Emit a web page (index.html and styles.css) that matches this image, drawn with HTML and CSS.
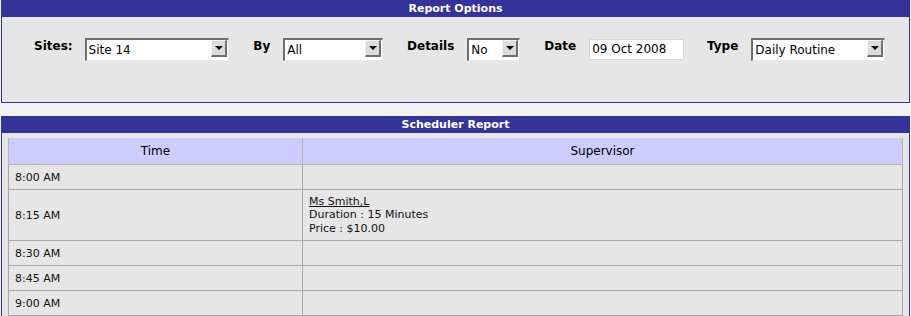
FILE: index.html
```html
<!DOCTYPE html>
<html lang="en">
<head>
	<meta charset="utf-8">
	<title>Scheduler Report</title>
	<link rel="stylesheet" href="styles.css">
</head>
<body>
	<div class="panel options">
		<div class="panel_title">Report Options</div>
		<div class="options_row">
			<span class="opt_label lbl_sites">Sites:</span>
			<div class="fake_select sel_sites"><span class="sel_value">Site 14</span><span class="sel_btn"></span></div>
			<span class="opt_label">By</span>
			<div class="fake_select sel_by"><span class="sel_value">All</span><span class="sel_btn"></span></div>
			<span class="opt_label">Details</span>
			<div class="fake_select sel_details"><span class="sel_value">No</span><span class="sel_btn"></span></div>
			<span class="opt_label">Date</span>
			<div class="date_input">09 Oct 2008</div>
			<span class="opt_label">Type</span>
			<div class="fake_select sel_type"><span class="sel_value">Daily Routine</span><span class="sel_btn"></span></div>
		</div>
	</div>
	<div class="panel report">
		<div class="panel_title">Scheduler Report</div>
		<div class="report_body">
			<table class="sched">
				<tr>
					<th class="col_time">Time</th>
					<th>Supervisor</th>
				</tr>
				<tr>
					<td>8:00 AM</td>
					<td></td>
				</tr>
				<tr>
					<td>8:15 AM</td>
					<td class="booking">
						<a class="who" href="#">Ms Smith,L</a><br>
						Duration : 15 Minutes<br>
						Price : $10.00
					</td>
				</tr>
				<tr>
					<td>8:30 AM</td>
					<td></td>
				</tr>
				<tr>
					<td>8:45 AM</td>
					<td></td>
				</tr>
				<tr>
					<td>9:00 AM</td>
					<td></td>
				</tr>
			</table>
		</div>
	</div>
</body>
</html>
```

FILE: styles.css
```css
body {
	margin: 0 1px;
	background: #f2f2f2;
	font-family: "DejaVu Sans", Verdana, sans-serif;
	color: #000;
}
.panel {
	border: 1px solid #333399;
	border-top: none;
	background: #e6e6e6;
	box-sizing: border-box;
	width: 909px;
}
.panel_title {
	background: #333399;
	color: #fff;
	font-weight: bold;
	font-size: 11px;
	text-align: center;
	height: 17px;
	line-height: 18px;
	margin: 0 -1px;
}
.options {
	height: 103px;
	margin-bottom: 13px;
}
.options_row {
	display: flex;
	align-items: flex-start;
	padding: 21px 0 0 32px;
}
.opt_label {
	font-weight: bold;
	font-size: 12px;
	line-height: 14px;
	margin-top: 1px;
	margin-right: 13px;
}
.lbl_sites {
	margin-right: 12px;
}
.fake_select {
	position: relative;
	height: 23px;
	box-sizing: border-box;
	background: #fff;
	border-style: solid;
	border-width: 2px 1px 1px 2px;
	border-color: #6e6e6e #e8e8e8 #e8e8e8 #6e6e6e;
	margin-right: 24px;
	font-size: 12px;
	line-height: 20px;
	padding-left: 2px;
}
.sel_btn {
	position: absolute;
	right: 1px;
	top: 0;
	width: 16px;
	height: 17px;
	box-sizing: border-box;
	background: #dcdcdc;
	border-style: solid;
	border-width: 1px 2px 2px 1px;
	border-color: #f4f4f4 #6e6e6e #6e6e6e #f4f4f4;
}
.sel_btn::after {
	content: "";
	position: absolute;
	left: 3px;
	top: 5px;
	border-left: 4px solid transparent;
	border-right: 4px solid transparent;
	border-top: 4px solid #000;
}
.sel_sites { width: 145px; }
.sel_by { width: 100px; }
.sel_details { width: 53px; }
.sel_type { width: 134px; }
.date_input {
	width: 95px;
	height: 21px;
	box-sizing: border-box;
	margin-top: 1px;
	margin-right: 23px;
	background: #fff;
	border: 1px solid #d8d8d8;
	font-size: 12px;
	line-height: 19px;
	padding-left: 2px;
}
.report {
	height: 210px;
}
.report_body {
	padding: 5px 6px 0 6px;
}
.sched {
	width: 100%;
	border-collapse: collapse;
	font-size: 11px;
}
.sched th {
	background: #ccccff;
	font-weight: normal;
	font-size: 12px;
	height: 26px;
	padding: 0;
	border: 1px solid #b4b4b4;
	border-top: none;
}
.sched th.col_time {
	width: 293px;
}
.sched td {
	height: 14px;
	line-height: 13px;
	padding: 5px 6px;
	border: 1px solid #a8a8a8;
	vertical-align: middle;
	color: #111;
}
.sched td.booking {
	line-height: 13.4px;
}
.who {
	color: #111;
}
```
